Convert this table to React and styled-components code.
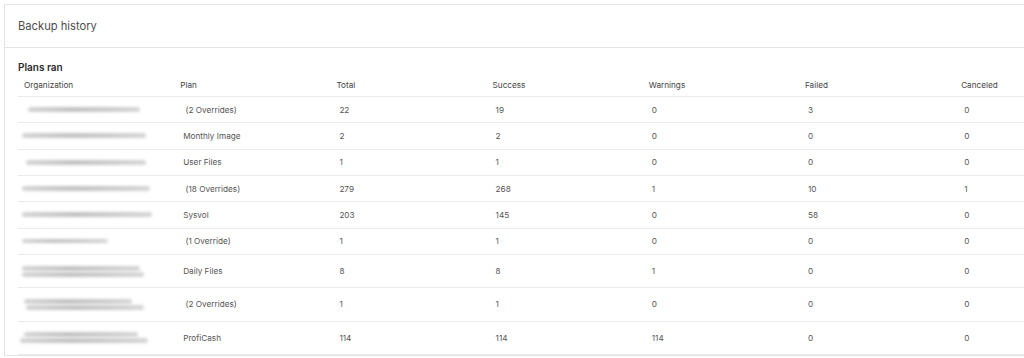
import React from "react";
import styled, { createGlobalStyle } from "styled-components";

const Global = createGlobalStyle`
  html, body { margin: 0; padding: 0; background: #ffffff; }
  body { font-family: Inter, "Noto Sans", "Liberation Sans", sans-serif; }
`;

const Page = styled.div`
  padding: 4px 0 0 4px;
  width: 100%;
  height: 358px;
  box-sizing: border-box;
  overflow: hidden;
`;

const Card = styled.section`
  width: 1120px;
  border: 1px solid #e4e4e4;
  border-right: none;
  background: #fff;
`;

const CardHeader = styled.header`
  height: 42px;
  display: flex;
  align-items: center;
  padding-left: 13px;
  border-bottom: 1px solid #e4e4e4;
  font-size: 11.2px;
  color: #4d4d4d;
`;

const CardBody = styled.div`
  padding: 12px 0 0 13px;
`;

const SectionTitle = styled.h3`
  margin: 0;
  height: 14px;
  line-height: 14px;
  font-size: 10px;
  font-weight: 600;
  color: #2a2a2a;
`;

const Grid = styled.div`
  display: grid;
  grid-template-columns: repeat(7, 156.2px);
`;

const HeadCell = styled.div`
  height: 23px;
  display: flex;
  align-items: center;
  padding-left: 6px;
  font-size: 8.2px;
  color: #444;
  border-bottom: 1px solid #ebebeb;
  box-sizing: border-box;
`;

const Cell = styled.div`
  height: ${(p) => p.$h}px;
  display: flex;
  align-items: center;
  padding-left: 9px;
  font-size: 8.2px;
  color: #555;
  white-space: pre;
  border-bottom: 1px solid #ebebeb;
  box-sizing: border-box;
`;

const OrgCell = styled(Cell)`
  padding-left: 0;
  flex-direction: column;
  align-items: flex-start;
  justify-content: center;
  gap: 1px;
`;

const Redacted = styled.span`
  display: block;
  height: ${(p) => p.$hh}px;
  width: ${(p) => p.$w}px;
  margin-left: ${(p) => p.$x}px;
  border-radius: 3px;
  background: linear-gradient(90deg, #d4d4d4, #c2c2c2 40%, #cbcbcb 70%, #d6d6d6);
  filter: blur(1.8px);
`;

const rows = [
  { org: [[10, 112, 5]], plan: " (2 Overrides)", v: [22, 19, 0, 3, 0], h: 26.33 },
  { org: [[4, 124, 5]], plan: "Monthly Image", v: [2, 2, 0, 0, 0], h: 26.33 },
  { org: [[8, 120, 5]], plan: "User Files", v: [1, 1, 0, 0, 0], h: 26.34 },
  { org: [[4, 128, 5]], plan: " (18 Overrides)", v: [279, 268, 1, 10, 1], h: 26.33 },
  { org: [[4, 130, 5]], plan: "Sysvol", v: [203, 145, 0, 58, 0], h: 26.33 },
  { org: [[4, 86, 4]], plan: " (1 Override)", v: [1, 1, 0, 0, 0], h: 26.34 },
  { org: [[4, 118, 5], [4, 122, 5]], plan: "Daily Files", v: [8, 8, 1, 0, 0], h: 33.3 },
  { org: [[6, 108, 5], [8, 118, 5]], plan: " (2 Overrides)", v: [1, 1, 0, 0, 0], h: 33.3 },
  { org: [[6, 114, 5], [2, 128, 5]], plan: "ProfiCash", v: [114, 114, 114, 0, 0], h: 33.4 },
];

const headers = ["Organization", "Plan", "Total", "Success", "Warnings", "Failed", "Canceled"];

export default function App() {
  return (
    <>
      <Global />
      <Page>
        <Card>
          <CardHeader>Backup history</CardHeader>
          <CardBody>
            <SectionTitle>Plans ran</SectionTitle>
            <Grid>
              {headers.map((h) => (
                <HeadCell key={h}>{h}</HeadCell>
              ))}
              {rows.map((r, i) => (
                <React.Fragment key={i}>
                  <OrgCell $h={r.h}>
                    {r.org.map(([x, w, hh], j) => (
                      <Redacted key={j} $x={x} $w={w} $hh={hh} />
                    ))}
                  </OrgCell>
                  <Cell $h={r.h}>{r.plan}</Cell>
                  {r.v.map((n, k) => (
                    <Cell key={k} $h={r.h}>{String(n)}</Cell>
                  ))}
                </React.Fragment>
              ))}
            </Grid>
          </CardBody>
        </Card>
      </Page>
    </>
  );
}
